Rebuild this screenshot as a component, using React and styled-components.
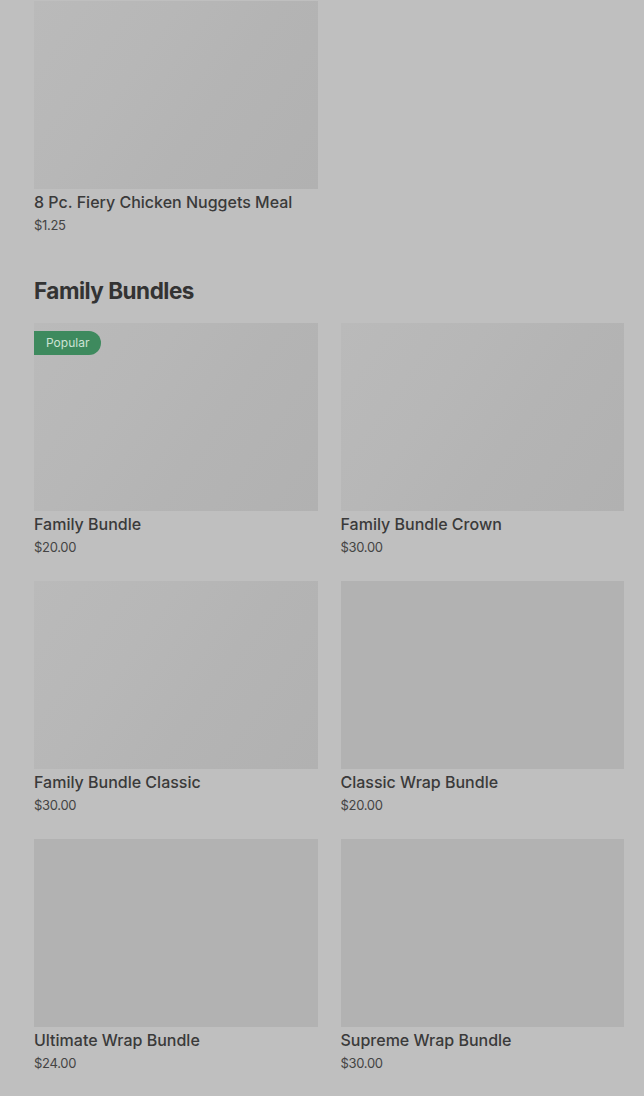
import React from "react";
import styled, { createGlobalStyle } from "styled-components";

const GlobalStyle = createGlobalStyle`
  html, body {
    margin: 0;
    padding: 0;
    background: #bfbfbf;
  }
  body {
    font-family: Inter, "Noto Sans", "Liberation Sans", sans-serif;
  }
`;

const Page = styled.div`
  width: 644px;
  height: 1096px;
  overflow: hidden;
  background: #bfbfbf;
  padding: 1px 20px 0 34px;
  box-sizing: border-box;
`;

const Section = styled.section`
  margin-bottom: ${(p) => p.$gap || 0}px;
`;

const Heading = styled.h2`
  margin: 0 0 16px;
  height: 32px;
  line-height: 32px;
  font-size: 22.5px;
  font-weight: 700;
  letter-spacing: -0.5px;
  color: #333333;
`;

const Grid = styled.div`
  display: grid;
  grid-template-columns: 1fr 1fr;
  column-gap: 23px;
  row-gap: 25px;
`;

const Card = styled.div`
  display: flex;
  flex-direction: column;
  min-width: 0;
`;

const Thumb = styled.div`
  position: relative;
  height: 188px;
  background: ${(p) =>
    p.$shimmer
      ? "linear-gradient(125deg, #bababa 0%, #b7b7b7 35%, #b4b4b4 60%, #b1b1b1 100%)"
      : "#b2b2b2"};
`;

const Badge = styled.span`
  position: absolute;
  top: 8px;
  left: 0;
  height: 24px;
  line-height: 24px;
  padding: 0 12px;
  border-radius: 0 12px 12px 0;
  background: #3e8a5e;
  color: #cde3d5;
  font-size: 12px;
  font-weight: 400;
`;

const Title = styled.div`
  margin-top: 2px;
  line-height: 22px;
  font-size: 16px;
  font-weight: 500;
  color: #3a3a3a;
  white-space: nowrap;
`;

const Price = styled.div`
  margin-top: 3px;
  line-height: 18px;
  font-size: 13px;
  color: #444444;
  letter-spacing: -0.3px;
`;

const bundles = [
  { name: "Family Bundle", price: "$20.00", popular: true, shimmer: true },
  { name: "Family Bundle Crown", price: "$30.00", shimmer: true },
  { name: "Family Bundle Classic", price: "$30.00", shimmer: true },
  { name: "Classic Wrap Bundle", price: "$20.00" },
  { name: "Ultimate Wrap Bundle", price: "$24.00" },
  { name: "Supreme Wrap Bundle", price: "$30.00" },
];

const Item = ({ item }) => (
  <Card>
    <Thumb $shimmer={item.shimmer}>
      {item.popular && <Badge>Popular</Badge>}
    </Thumb>
    <Title>{item.name}</Title>
    <Price>{item.price}</Price>
  </Card>
);

export default function App() {
  return (
    <Page>
      <GlobalStyle />
      <Section $gap={41}>
        <Grid>
          <Item item={{ name: "8 Pc. Fiery Chicken Nuggets Meal", price: "$1.25", shimmer: true }} />
        </Grid>
      </Section>
      <Section>
        <Heading>Family Bundles</Heading>
        <Grid>
          {bundles.map((b) => (
            <Item key={b.name} item={b} />
          ))}
        </Grid>
      </Section>
    </Page>
  );
}
